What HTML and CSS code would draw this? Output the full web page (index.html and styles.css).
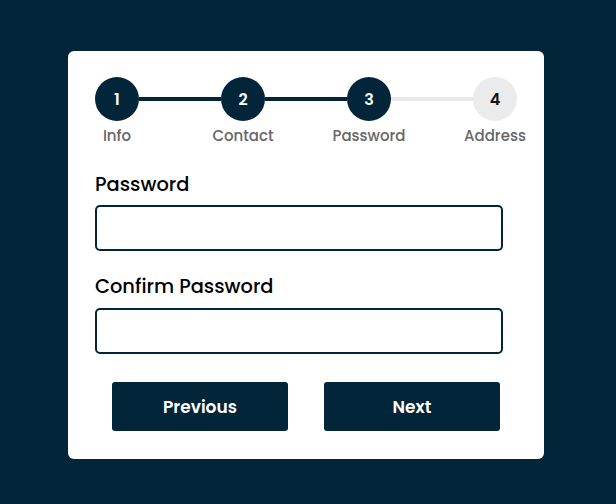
FILE: index.html
```html
<!DOCTYPE html>
<html>
<head>
<meta charset="utf-8">
<link rel="stylesheet" href="styles.css">
</head>
<body>
<div class="card">
  <div class="stepper">
    <div class="step done"><div class="circle">1</div><div class="label">Info</div></div>
    <div class="line done"></div>
    <div class="step done"><div class="circle">2</div><div class="label">Contact</div></div>
    <div class="line done"></div>
    <div class="step done"><div class="circle">3</div><div class="label">Password</div></div>
    <div class="line"></div>
    <div class="step"><div class="circle">4</div><div class="label">Address</div></div>
  </div>
  <form class="form">
    <label class="field-label">Password</label>
    <input class="input" type="password">
    <label class="field-label second">Confirm Password</label>
    <input class="input" type="password">
    <div class="buttons">
      <button type="button" class="btn">Previous</button>
      <button type="button" class="btn">Next</button>
    </div>
  </form>
</div>
</body>
</html>
```
FILE: styles.css
```css
html, body {
  margin: 0;
  padding: 0;
}
body {
  background: #022539;
  width: 616px;
  height: 504px;
  font-family: Poppins, Inter, "Noto Sans", sans-serif;
  display: flex;
  justify-content: flex-start;
  padding: 51px 0 0 68px;
  box-sizing: border-box;
}
.card {
  width: 476px;
  height: 408px;
  box-sizing: border-box;
  background: #fff;
  border-radius: 6px;
  padding: 26px 27px 0 27px;
}
.stepper {
  display: flex;
  align-items: flex-start;
}
.step {
  width: 44px;
  display: flex;
  flex-direction: column;
  align-items: center;
}
.circle {
  width: 44px;
  height: 44px;
  border-radius: 50%;
  background: #ebebeb;
  color: #111;
  font-size: 16px;
  font-weight: 600;
  display: flex;
  align-items: center;
  justify-content: center;
}
.step.done .circle {
  background: #022539;
  color: #fff;
}
.label {
  margin-top: 4px;
  font-size: 15px;
  line-height: 22px;
  color: #666;
  white-space: nowrap;
  font-weight: 500;
}
.line {
  flex: 1;
  height: 4px;
  margin-top: 20px;
  background: #e8e8e8;
}
.line.done {
  background: #022539;
}
.form {
  margin-top: 25px;
  display: flex;
  flex-direction: column;
}
.field-label {
  font-size: 19.4px;
  line-height: 26px;
  font-weight: 500;
  color: #000;
}
.field-label.second {
  margin-top: 23px;
}
.input {
  margin-top: 7px;
  width: 408px;
  height: 46px;
  box-sizing: border-box;
  border: 2px solid #022539;
  border-radius: 5px;
  outline: none;
  padding: 0 10px;
}
.input + .field-label + .input {
  margin-top: 8px;
}
.buttons {
  margin-top: 28px;
  display: flex;
  justify-content: center;
  gap: 36px;
}
.btn {
  width: 176px;
  height: 49px;
  border: none;
  border-radius: 3px;
  background: #022539;
  color: #fff;
  font-family: inherit;
  font-size: 17px;
  font-weight: 600;
}
```
